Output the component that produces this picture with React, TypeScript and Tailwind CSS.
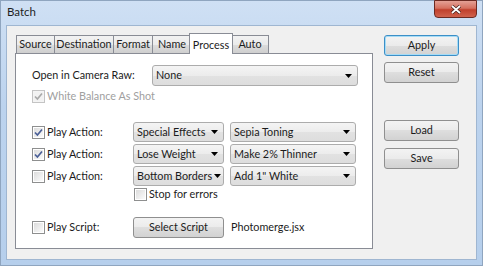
import React from 'react';

interface CheckProps {
  checked?: boolean;
  disabled?: boolean;
}

const Check: React.FC<CheckProps> = ({ checked, disabled }) => (
  <span
    className={`relative flex h-[13px] w-[13px] shrink-0 items-center justify-center border ${
      disabled ? 'border-[#c4c4c4] bg-[#f4f4f4]' : 'border-[#8e8f8f] bg-white'
    }`}
  >
    <span
      className={`h-[9px] w-[9px] ${
        disabled ? 'bg-[#f2f2f2]' : 'bg-gradient-to-br from-[#dcdcdc] to-[#fbfbfb]'
      }`}
    />
    {checked && (
      <svg className="absolute left-0 top-0" width="11" height="11" viewBox="0 0 11 11">
        <path
          d="M2 5.5L4.4 8L9 2.5"
          fill="none"
          stroke={disabled ? '#a9a9a9' : '#4a5f97'}
          strokeWidth="1.7"
        />
      </svg>
    )}
  </span>
);

interface ComboProps {
  value: string;
  className: string;
}

const Combo: React.FC<ComboProps> = ({ value, className }) => (
  <div
    className={`flex items-center justify-between gap-[2px] whitespace-nowrap rounded-[3px] border border-[#acacac] bg-[linear-gradient(#f4f4f4_0%,#ececec_50%,#e2e2e2_50%,#dddddd_100%)] pl-[3px] pr-[5px] ${className}`}
  >
    <span className="leading-none">{value}</span>
    <svg className="shrink-0" width="7" height="4" viewBox="0 0 7 4">
      <path d="M0 0H7L3.5 4Z" fill="#000" />
    </svg>
  </div>
);

interface BtnProps {
  label: string;
  primary?: boolean;
  className?: string;
}

const Btn: React.FC<BtnProps> = ({ label, primary, className = '' }) => (
  <div
    className={`flex h-[21px] items-center justify-center whitespace-nowrap rounded-[3px] border bg-[linear-gradient(#f3f3f3_0%,#ebebeb_50%,#dedede_50%,#d2d2d2_100%)] leading-none ${
      primary ? 'border-[#3c8fc7] shadow-[inset_0_0_0_1px_#a6dcf6]' : 'border-[#8f8f8f]'
    } ${className}`}
  >
    {label}
  </div>
);

const tabs = [
  { name: 'Source', w: 'w-[39px]' },
  { name: 'Destination', w: 'w-[60px]' },
  { name: 'Format', w: 'w-[40px]' },
  { name: 'Name', w: 'w-[40px]' },
  { name: 'Process', w: 'w-[44px]', active: true },
  { name: 'Auto', w: 'w-[38px]' },
];

const actions = [
  { on: true, set: 'Special Effects', action: 'Sepia Toning' },
  { on: true, set: 'Lose Weight', action: 'Make 2% Thinner' },
  { on: false, set: 'Bottom Borders', action: 'Add 1" White' },
];

export default function App() {
  return (
    <div className="flex h-[266px] w-[483px] flex-col whitespace-nowrap border border-[#8fa5bf] bg-[linear-gradient(#cfe0f4,#bcd3ee_40%,#b6cfec)] font-['Lato',sans-serif] text-[10.8px] text-[#1b1b1b]">
      {/* title bar */}
      <div className="relative flex h-[24px] items-center pl-[6px] pb-[2px]">
        <span className="text-[11.5px] text-[#1e1e1e]">Batch</span>
        <div className="absolute right-[5px] top-[-1px] flex h-[18px] w-[43px] items-center justify-center rounded-b-[4px] border border-[#6b2a22] bg-[linear-gradient(#e4a196_0%,#d5705f_45%,#c0402c_55%,#d0624d_100%)]">
          <svg width="10" height="9" viewBox="0 0 10 9">
            <path d="M1 1L9 8M9 1L1 8" stroke="#3a1a16" strokeWidth="3.2" />
            <path d="M1 1L9 8M9 1L1 8" stroke="#ffffff" strokeWidth="1.8" />
          </svg>
        </div>
      </div>

      {/* client area */}
      <div className="mx-[5px] mb-[5px] flex flex-1 border border-[#9fb6d1] bg-[#f0f0f0] pl-[8px] pt-[7px]">
        {/* tab control */}
        <div className="flex w-[358px] flex-col">
          <div className="flex h-[20px] items-end pl-[1px]">
            {tabs.map((t) =>
              t.active ? (
                <div
                  key={t.name}
                  className={`relative z-10 -mx-[2px] -mb-px flex h-[21px] items-start justify-center border border-b-0 border-[#898c95] bg-white pt-[3px] ${t.w}`}
                >
                  {t.name}
                </div>
              ) : (
                <div
                  key={t.name}
                  className={`-mr-px flex h-[18px] items-center justify-center border border-b-0 border-[#898c95] bg-[linear-gradient(#f2f2f2,#ebebeb_50%,#dddddd_50%,#cfcfcf)] ${t.w}`}
                >
                  {t.name}
                </div>
              )
            )}
          </div>
          <div className="flex h-[196px] flex-col border border-[#898c95] bg-white pl-[16px] pt-[11px]">
            <div className="flex h-[21px] items-center">
              <span className="w-[120px]">Open in Camera Raw:</span>
              <Combo value="None" className="h-[21px] w-[206px]" />
            </div>
            <div className="mt-[3px] flex h-[14px] items-center gap-[2px] text-[#a0a0a0]">
              <Check checked disabled />
              <span>White Balance As Shot</span>
            </div>

            <div className="mt-[19px] flex flex-col gap-[2px]">
              {actions.map((a) => (
                <div key={a.set} className="flex h-[20px] items-center">
                  <div className="flex w-[101px] items-center gap-[2px]">
                    <Check checked={a.on} />
                    <span>Play Action:</span>
                  </div>
                  <Combo value={a.set} className="h-[20px] w-[91px]" />
                  <Combo value={a.action} className="ml-[6px] h-[20px] w-[126px]" />
                </div>
              ))}
            </div>

            <div className="mt-[1px] flex h-[14px] items-center gap-[2px] pl-[102px]">
              <Check />
              <span>Stop for errors</span>
            </div>

            <div className="mt-[16px] flex h-[21px] items-center">
              <div className="flex w-[101px] items-center gap-[2px]">
                <Check />
                <span>Play Script:</span>
              </div>
              <Btn label="Select Script" className="w-[91px]" />
              <span className="ml-[7px]">Photomerge.jsx</span>
            </div>
          </div>
        </div>

        {/* buttons */}
        <div className="ml-[11px] flex flex-col pt-[2px]">
          <Btn label="Apply" primary className="w-[75px]" />
          <Btn label="Reset" className="mt-[6px] w-[75px]" />
          <Btn label="Load" className="mt-[37px] w-[75px]" />
          <Btn label="Save" className="mt-[7px] w-[75px]" />
        </div>
      </div>
    </div>
  );
}
